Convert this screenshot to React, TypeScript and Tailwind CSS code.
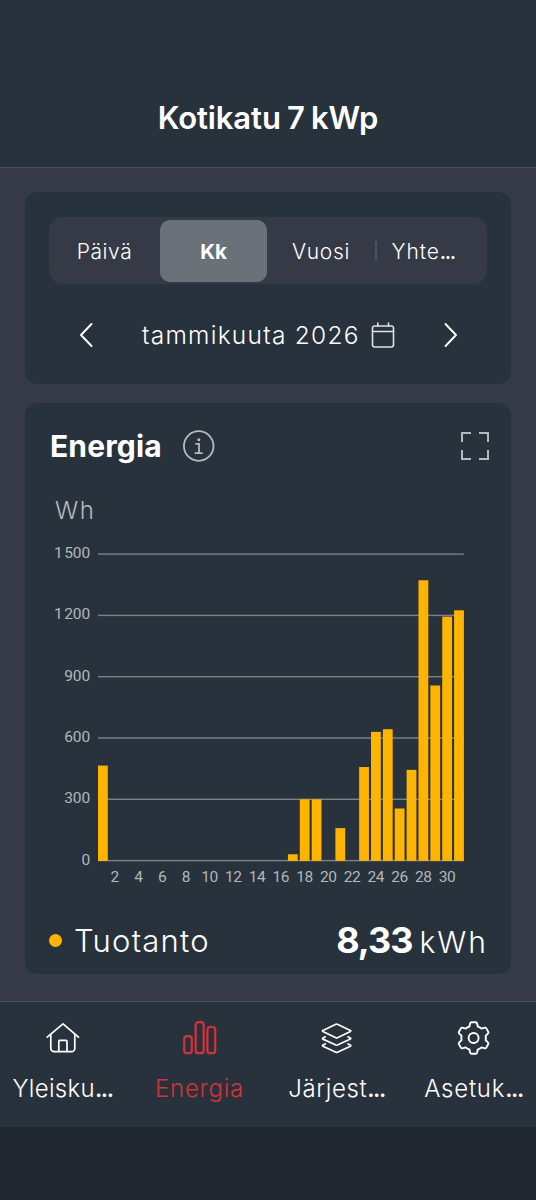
import React from "react";

const production: Record<number, number> = {
  1: 465,
  17: 31,
  18: 300,
  19: 300,
  21: 159,
  23: 458,
  24: 630,
  25: 643,
  26: 255,
  27: 444,
  28: 1372,
  29: 857,
  30: 1194,
  31: 1225,
};

const days = Array.from({ length: 31 }, (_, i) => i + 1);
const ticks = [
  { value: 1500, label: "1 500" },
  { value: 1200, label: "1 200" },
  { value: 900, label: "900" },
  { value: 600, label: "600" },
  { value: 300, label: "300" },
  { value: 0, label: "0" },
];

const BASE = 320.6;
const yOf = (value: number) => BASE - (value / 300) * 61.3;
const xOf = (day: number) => 49 + (day - 1) * 11.87;

const Chart = () => (
  <svg width="438" height="350" viewBox="0 0 438 350" className="block">
    {ticks.map((tick) => (
      <g key={tick.value}>
        <rect x="49" y={yOf(tick.value) - 0.7} width="365.8" height="1.4" fill="#7b8187" />
        <text
          x="41.3"
          y={yOf(tick.value) + 4}
          textAnchor="end"
          fill="#b3b7bb"
          fontSize="15.5"
          wordSpacing="-2.4"
          className="font-['Roboto',sans-serif]"
        >
          {tick.label}
        </text>
      </g>
    ))}
    {days
      .filter((day) => production[day])
      .map((day) => (
        <rect
          key={day}
          x={xOf(day)}
          y={yOf(production[day])}
          width="9.8"
          height={BASE + 0.3 - yOf(production[day])}
          fill="#ffb400"
        />
      ))}
    {days
      .filter((day) => day % 2 === 0)
      .map((day) => (
        <text
          key={day}
          x={xOf(day) + 4.8}
          y="342.3"
          textAnchor="middle"
          fill="#b3b7bb"
          fontSize="15.5"
          letterSpacing="-0.4"
          className="font-['Roboto',sans-serif]"
        >
          {day}
        </text>
      ))}
  </svg>
);

const HomeIcon = () => (
  <svg width="34" height="34" viewBox="0 0 34 34" fill="none" stroke="currentColor" strokeWidth="1.7" strokeLinecap="round" strokeLinejoin="round">
    <path d="M1.2 16.2 17 2.8l15.5 13.4" />
    <path d="M4.8 13.5V27.3a3.4 3.4 0 0 0 3.4 3.4h17.2a3.4 3.4 0 0 0 3.4-3.4V13.5" />
    <path d="M12.8 30.5V20.3a1 1 0 0 1 1-1h6.2a1 1 0 0 1 1 1V30.5" />
  </svg>
);

const EnergyIcon = () => (
  <svg width="34" height="34" viewBox="0 0 34 34" fill="none" stroke="currentColor" strokeWidth="2.2">
    <rect x="1.2" y="15.2" width="7.6" height="17" rx="2.8" />
    <rect x="12.7" y="1.2" width="8" height="31" rx="2.8" />
    <rect x="24.4" y="6" width="7.8" height="26.2" rx="2.8" />
  </svg>
);

const LayersIcon = () => (
  <svg width="34" height="34" viewBox="0 0 34 34" fill="none" stroke="currentColor" strokeWidth="1.7" strokeLinecap="round" strokeLinejoin="round">
    <path d="M15.9 3.2a2 2 0 0 1 1.5 0l13 6.2a.6.6 0 0 1 0 1.1l-13 6.2a2 2 0 0 1-1.5 0l-13-6.2a.6.6 0 0 1 0-1.1z" />
    <path d="m5.3 15.8-2.4 1.2a.6.6 0 0 0 0 1.1l13 6a2 2 0 0 0 1.5 0l13-6a.6.6 0 0 0 0-1.1l-2.4-1.2" />
    <path d="m5.3 22.9-2.4 1.2a.6.6 0 0 0 0 1.1l13 6a2 2 0 0 0 1.5 0l13-6a.6.6 0 0 0 0-1.1l-2.4-1.2" />
  </svg>
);

const GearIcon = () => (
  <svg width="34" height="34" viewBox="0.4 0 34 34" fill="none" stroke="currentColor" strokeWidth="1.9" strokeLinejoin="round">
    <path d="M12.8 5.5 13.6 2.2Q13.9 1.2 14.9 1.2H19.1Q20.1 1.2 20.4 2.2L21.2 5.5Q23.2 6.1 24.86 7.61L28.2 6.7Q29.2 6.5 29.7 7.4L31.7 10.9Q32.18 11.7 31.5 12.4L29.06 14.89Q29.5 17 29.06 19.11L31.5 21.6Q32.18 22.3 31.7 23.1L29.7 26.6Q29.2 27.5 28.2 27.3L24.86 26.39Q23.2 27.9 21.2 28.5L20.4 31.8Q20.1 32.8 19.1 32.8H14.9Q13.9 32.8 13.6 31.8L12.8 28.5Q10.8 27.9 9.14 26.39L5.8 27.3Q4.8 27.5 4.3 26.6L2.3 23.1Q1.82 22.3 2.5 21.6L4.94 19.11Q4.5 17 4.94 14.89L2.5 12.4Q1.82 11.7 2.3 10.9L4.3 7.4Q4.8 6.5 5.8 6.7L9.14 7.61Q10.8 6.1 12.8 5.5Z" />
    <circle cx="17" cy="17" r="5" />
  </svg>
);

const Dots = () => <span className="font-medium tracking-[-1.4px]">...</span>;

const navItems = [
  { label: "Yleisku", cut: true, icon: <HomeIcon />, color: "text-white", tracking: "tracking-[0.3px]" },
  { label: "Energia", cut: false, icon: <EnergyIcon />, color: "text-[#d5333a]", tracking: "tracking-[0.75px]" },
  { label: "Järjest", cut: true, icon: <LayersIcon />, color: "text-white", tracking: "tracking-[0.6px]" },
  { label: "Asetuk", cut: true, icon: <GearIcon />, color: "text-white", tracking: "tracking-[0.75px]" },
];

const App = () => {
  return (
    <div className="flex h-[1200px] w-[536px] flex-col overflow-hidden bg-[#212731] font-['Inter',sans-serif] text-white">
      <header className="flex h-[168px] shrink-0 items-end justify-center border-b border-[#444e58] bg-[#28323c] pb-[29px]">
        <h1 className="text-[31px] leading-[40px] font-semibold tracking-[-0.1px] [word-spacing:-1.5px]">
          Kotikatu 7 kWp
        </h1>
      </header>
      <main className="flex h-[833px] shrink-0 flex-col gap-[19px] bg-[#353a46] px-[25px] pt-6">
        <section className="h-48 rounded-xl bg-[#28323c] px-6 pt-[25px]">
          <div className="flex h-[67px] items-center rounded-[14px] bg-[#353a46] text-[21px] font-[350]">
            <div className="w-[111px] pt-0.5 text-center tracking-[0.6px]">Päivä</div>
            <div className="flex h-[62px] w-[107px] items-center justify-center rounded-[10px] bg-[#6a7178] pt-[3px] text-[20.5px] font-bold">
              Kk
            </div>
            <div className="w-[108px] pt-0.5 text-center tracking-[0.7px]">Vuosi</div>
            <div className="h-[19px] w-[1.5px] bg-[#4d535e]"></div>
            <div className="pt-0.5 pl-[15px] tracking-[0.9px]">
              Yhte
              <Dots />
            </div>
          </div>
          <div className="flex h-[101px] items-center pl-[30px]">
            <svg width="14" height="26" viewBox="0 0 14 26" fill="none" stroke="white" strokeWidth="1.9" strokeLinecap="round" strokeLinejoin="round">
              <path d="M12.5 2 2 13l10.5 11" />
            </svg>
            <p className="ml-[49px] w-[218px] pt-px text-[24.5px] font-[350] tracking-[1.25px] whitespace-nowrap">
              tammikuuta 2026
            </p>
            <svg width="24" height="26" viewBox="0 0 24 26" fill="none" stroke="#dfe1e3" strokeWidth="1.6" strokeLinecap="round" className="ml-[11px]">
              <rect x="1.5" y="4" width="21" height="21" rx="2.2" />
              <path d="M1.5 9.5h21M6.8 1v3M17.5 1v3" />
            </svg>
            <svg width="14" height="26" viewBox="0 0 14 26" fill="none" stroke="white" strokeWidth="1.9" strokeLinecap="round" strokeLinejoin="round" className="ml-[49px]">
              <path d="m1.5 2 10.5 11L1.5 24" />
            </svg>
          </div>
        </section>
        <section className="h-[571px] rounded-xl bg-[#28323c] px-6 pt-[23px]">
          <div className="flex h-10 items-center">
            <h2 className="w-[133px] pl-px text-[30px] leading-10 font-bold tracking-[0.15px]">
              Energia
            </h2>
            <svg width="34" height="34" viewBox="0 0 34 34" fill="none" stroke="#b6babe" strokeWidth="1.8">
              <circle cx="16.7" cy="17" r="14.8" />
              <path d="M13.4 14.8h3.6v9.4M12.7 24.2h8" />
              <circle cx="16.8" cy="10.7" r="1.5" fill="#b6babe" stroke="none" />
            </svg>
            <svg width="28" height="28" viewBox="0 0 28 28" fill="none" stroke="#b6babe" strokeWidth="2" className="ml-auto -mr-[1.5px]">
              <path d="M1 10V1h9M18 1h9v9M27 18v9h-9M10 27H1v-9" />
            </svg>
          </div>
          <p className="mt-[30px] pl-1.5 text-[24px] leading-[30px] font-[350] tracking-[1.5px] text-[#b6babe]">
            Wh
          </p>
          <div className="mt-[14px] h-[350px]">
            <Chart />
          </div>
          <div className="mt-[25px] flex h-[50px] items-center">
            <span className="mr-3 size-[13px] rounded-full bg-[#ffb400]"></span>
            <span className="pt-px text-[31px] leading-10 font-[350] tracking-[1.2px]">Tuotanto</span>
            <span className="ml-auto flex items-baseline gap-[7px] pt-0.5">
              <strong className="text-[36px] leading-10 font-bold tracking-[-1px]">8,33</strong>
              <span className="-mr-px text-[30px] leading-10 font-[350] tracking-[2px]">kWh</span>
            </span>
          </div>
        </section>
      </main>
      <nav className="flex h-[126px] shrink-0 justify-between border-t border-[#4c545e] bg-[#28323c] px-[13px] pt-[19px]">
        {navItems.map((item) => (
          <div key={item.label} className={`flex w-[99px] flex-col items-center ${item.color}`}>
            {item.icon}
            <span className={`mt-[18px] text-[24px] leading-[32px] font-[350] whitespace-nowrap ${item.tracking}`}>
              {item.label}
              {item.cut && <Dots />}
            </span>
          </div>
        ))}
      </nav>
    </div>
  );
};

export default App;
